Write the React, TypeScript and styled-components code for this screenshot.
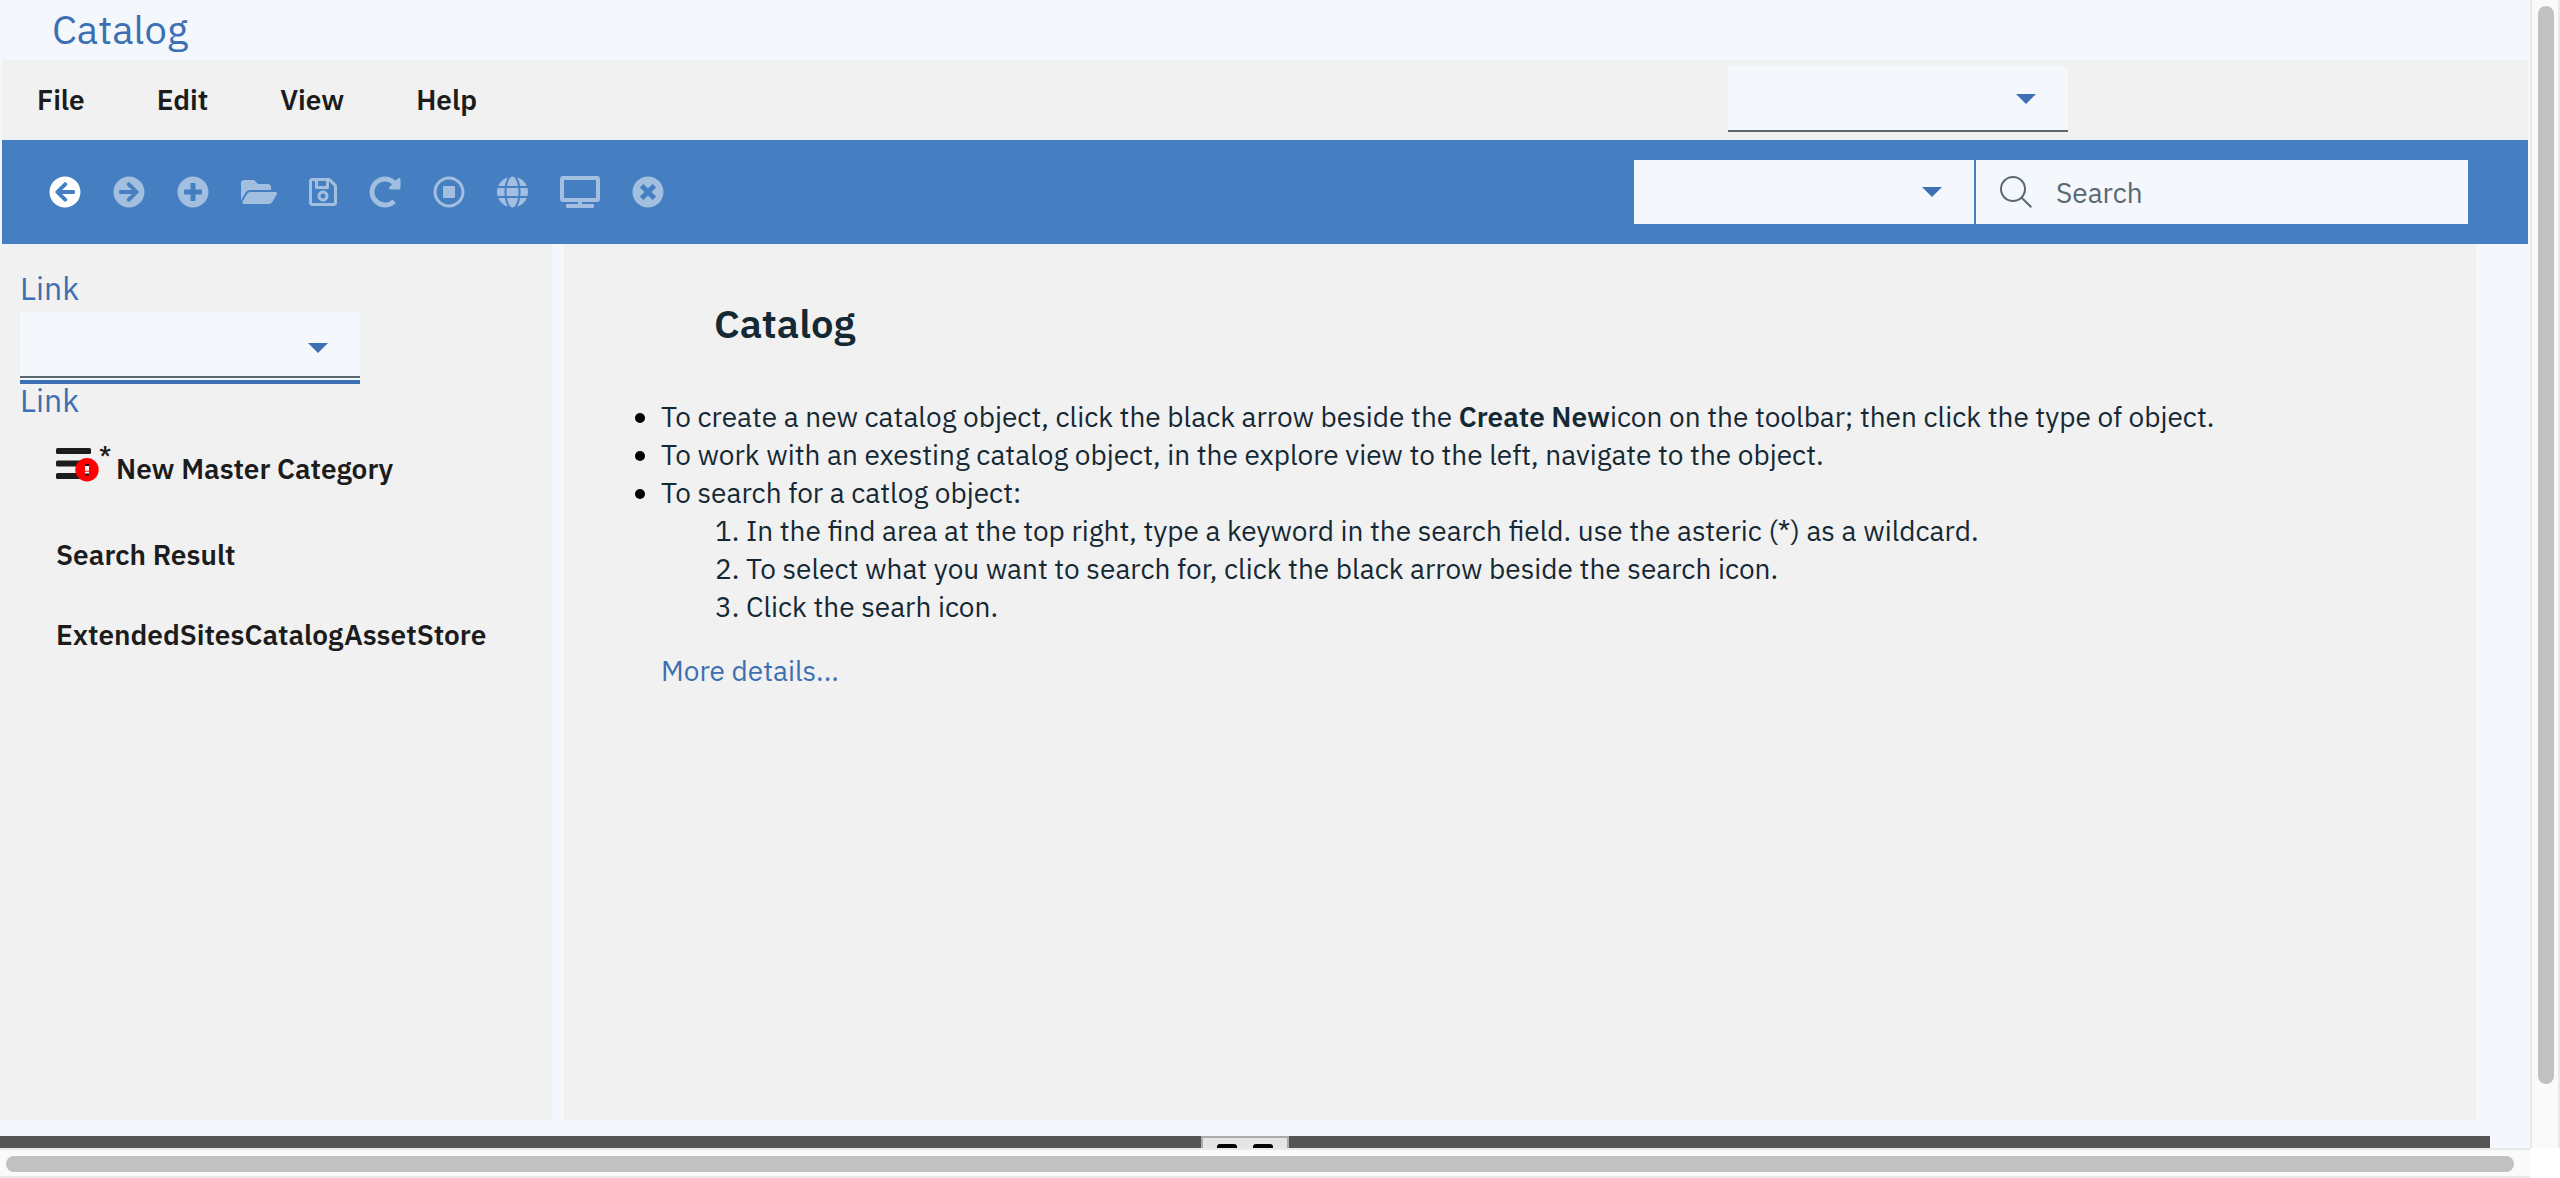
import React from "react";
import styled, { createGlobalStyle } from "styled-components";
import {
  FaArrowCircleLeft,
  FaArrowCircleRight,
  FaFolderOpen,
  FaGlobe,
  FaPlusCircle,
  FaRedoAlt,
  FaRegSave,
  FaRegStopCircle,
  FaTimesCircle,
  FaTv,
} from "react-icons/fa";

const color = {
  page: "#f4f7fc",
  panel: "#f1f1f1",
  brand: "#457ec1",
  link: "#3d70b2",
  text: "#152935",
  strong: "#1c1c1c",
  muted: "#5a6872",
};

const GlobalStyle = createGlobalStyle`
  * { box-sizing: border-box; }
  body {
    margin: 0;
    background: #fff;
    color: ${color.text};
    font-family: "IBM Plex Sans", Roboto, "Liberation Sans", sans-serif;
    font-size: 28px;
  }
  a { color: ${color.link}; text-decoration: none; }
  b { font-weight: 600; }
  ul, ol, h1, h2, p { margin: 0; padding: 0; }
  button, select, input { font: inherit; }
`;

const Frame = styled.div`
  display: grid;
  grid-template-columns: minmax(0, 1fr) 30px;
  grid-template-rows: minmax(0, 1fr) 30px;
  height: 100vh;
  overflow: hidden;
`;

const Page = styled.div`
  display: flex;
  flex-direction: column;
  background: ${color.page};
`;

const TitleBar = styled.header`
  padding: 0 0 2px 52px;
  font-size: 40px;
  line-height: 58px;
`;

const MenuBar = styled.nav`
  display: flex;
  justify-content: space-between;
  align-items: center;
  height: 80px;
  margin: 0 2px;
  padding: 6px 460px 8px 35px;
  background: ${color.panel};
`;

const MenuList = styled.div`
  display: flex;
  gap: 72px;
  padding-top: 2px;
`;

const MenuButton = styled.button`
  padding: 0;
  border: 0;
  background: none;
  color: ${color.strong};
  font-weight: 600;
  line-height: 40px;
`;

const Toolbar = styled.div`
  display: flex;
  justify-content: space-between;
  align-items: center;
  height: 104px;
  margin: 0 2px;
  padding: 0 60px 0 47px;
  background: ${color.brand};
`;

const ToolGroup = styled.div`
  display: flex;
  gap: 32px;
`;

const ToolButton = styled.button<{ $active?: boolean; $width?: number }>`
  display: flex;
  padding: 0;
  border: 0;
  background: none;
  color: #fff;
  opacity: ${(p) => (p.$active ? 1 : 0.5)};

  svg {
    width: ${(p) => p.$width ?? 32}px;
    height: 32px;
  }
`;

const SearchGroup = styled.div`
  display: flex;
  gap: 2px;
`;

const SelectBox = styled.div<{ $line?: boolean; $focused?: boolean }>`
  display: grid;
  width: 340px;
  background: ${color.page};
  padding-bottom: ${(p) => (p.$focused ? 2 : 0)}px;
  border-bottom: ${(p) => (p.$focused ? `4px solid ${color.link}` : "0")};

  select,
  &::after {
    grid-area: 1 / 1;
  }

  select {
    width: 100%;
    height: ${(p) => (p.$line ? 66 : 64)}px;
    border: 0;
    border-bottom: ${(p) => (p.$line ? `2px solid ${color.muted}` : "0")};
    border-radius: 0;
    outline: 0;
    appearance: none;
    background: none;
    color: ${color.text};
  }

  &::after {
    content: "";
    align-self: center;
    justify-self: end;
    margin: ${(p) => (p.$focused ? 6 : 0)}px 32px 0 0;
    border: 10px solid transparent;
    border-top-color: ${color.link};
    border-bottom: 0;
    pointer-events: none;
  }
`;

const SearchField = styled.label`
  display: flex;
  align-items: center;
  gap: 24px;
  width: 492px;
  height: 64px;
  padding: 0 24px;
  background: ${color.page};

  input {
    flex: 1;
    min-width: 0;
    padding: 0;
    border: 0;
    outline: 0;
    background: none;
    color: ${color.text};
  }

  input::placeholder {
    color: ${color.muted};
    opacity: 1;
  }
`;

const Body = styled.div`
  display: flex;
  flex: 1;
  gap: 12px;
  min-height: 0;
  padding: 0 54px 16px 0;
`;

const Sidebar = styled.aside`
  width: 552px;
  padding: 28px 20px;
  background: ${color.panel};
`;

const SideLink = styled.a`
  display: block;
  width: max-content;
  font-size: 32px;
  line-height: 32px;

  & + div {
    margin-top: 8px;
  }
`;

const Tree = styled.ul`
  margin-top: 6px;
  padding-left: 36px;
  list-style: none;
`;

const TreeItem = styled.li<{ $tall?: boolean }>`
  display: flex;
  align-items: center;
  height: ${(p) => (p.$tall ? 92 : 80)}px;
  color: ${color.strong};
  font-weight: 600;
`;

const CategoryMark = styled.span`
  display: flex;
  align-items: flex-start;
  width: 60px;
  height: 40px;
  font-size: 22px;
  line-height: 14px;

  svg {
    flex: none;
  }
`;

const Content = styled.main`
  flex: 1;
  padding: 52px 60px 0 97px;
  background: ${color.panel};
  line-height: 38px;
`;

const Heading = styled.h2`
  margin-bottom: 48px;
  padding-left: 53px;
  font-size: 40px;
  font-weight: 600;
  line-height: 54px;
`;

const Bullets = styled.ul`
  > li::marker {
    color: #000;
  }
`;

const Steps = styled.ol`
  padding-left: 85px;
`;

const MoreDetails = styled.p`
  margin-top: 26px;
`;

const SplitBar = styled.div`
  display: flex;
  justify-content: center;
  height: 12px;
  margin-right: 40px;
  background: #555;
`;

const SplitHandle = styled.div`
  display: flex;
  justify-content: center;
  gap: 16px;
  width: 88px;
  padding-top: 6px;
  border: 2px solid #ababab;
  border-bottom: 0;
  background: #e5e5e5;
`;

const Grip = styled.span`
  width: 20px;
  height: 4px;
  border-radius: 3px 3px 0 0;
  background: #000;
`;

const ScrollTrack = styled.div<{ $vertical?: boolean }>`
  border: solid #e9e9eb;
  border-width: ${(p) => (p.$vertical ? "0 2px" : "2px 0")};
  padding: ${(p) => (p.$vertical ? "6px 4px 64px 6px" : "6px 16px 4px 6px")};
  background: #fafafa;
`;

const ScrollThumb = styled.div`
  height: 100%;
  border-radius: 8px;
  background: #c1c1c1;
`;

const tools = [
  { label: "Back", Icon: FaArrowCircleLeft, active: true },
  { label: "Forward", Icon: FaArrowCircleRight },
  { label: "Create new", Icon: FaPlusCircle },
  { label: "Open", Icon: FaFolderOpen, width: 36 },
  { label: "Save", Icon: FaRegSave, width: 28 },
  { label: "Refresh", Icon: FaRedoAlt },
  { label: "Stop", Icon: FaRegStopCircle },
  { label: "Web", Icon: FaGlobe, width: 31 },
  { label: "Preview", Icon: FaTv, width: 40 },
  { label: "Close", Icon: FaTimesCircle },
];

function Select({ label, line, focused }: { label: string; line?: boolean; focused?: boolean }) {
  return (
    <SelectBox $line={line} $focused={focused}>
      <select aria-label={label} defaultValue="">
        <option value="" />
      </select>
    </SelectBox>
  );
}

function SearchIcon() {
  return (
    <svg width="32" height="32" viewBox="0 0 32 32" fill="none" stroke={color.muted} strokeWidth="2" aria-hidden="true">
      <circle cx="13" cy="13" r="12" />
      <path d="M21.5 21.5 31.3 31.3" />
    </svg>
  );
}

function CategoryIcon() {
  return (
    <svg width="43" height="34" viewBox="0 0 43 34" aria-hidden="true">
      <g fill={color.strong}>
        <rect x="0" y="0" width="35" height="6" rx="1.5" />
        <rect x="0" y="12.5" width="35" height="6" rx="1.5" />
        <rect x="0" y="25" width="35" height="6" rx="1.5" />
      </g>
      <circle cx="31" cy="21.7" r="11.7" fill="#f00" />
      <rect x="29" y="16" width="4" height="11" fill="#fff" />
      <path d="M29 16h4v2h-4zM29 25.5h4v2h-4z" fill={color.strong} />
      <path d="M29 23.2h4" stroke="#f00" strokeWidth="1" />
    </svg>
  );
}

export default function App() {
  return (
    <>
      <GlobalStyle />
      <Frame>
        <Page>
          <TitleBar>
            <a href="#catalog">Catalog</a>
          </TitleBar>
          <MenuBar aria-label="Main menu">
            <MenuList>
              {["File", "Edit", "View", "Help"].map((name) => (
                <MenuButton key={name}>{name}</MenuButton>
              ))}
            </MenuList>
            <Select label="Store" line />
          </MenuBar>
          <Toolbar>
            <ToolGroup>
              {tools.map(({ label, Icon, active, width }) => (
                <ToolButton key={label} aria-label={label} $active={active} $width={width}>
                  <Icon />
                </ToolButton>
              ))}
            </ToolGroup>
            <SearchGroup>
              <Select label="Search type" />
              <SearchField>
                <SearchIcon />
                <input type="text" placeholder="Search" aria-label="Search" />
              </SearchField>
            </SearchGroup>
          </Toolbar>
          <Body>
            <Sidebar>
              <SideLink href="#explore">Link</SideLink>
              <Select label="Explore" line focused />
              <SideLink href="#tree">Link</SideLink>
              <Tree>
                <TreeItem $tall>
                  <CategoryMark>
                    <CategoryIcon />*
                  </CategoryMark>
                  New Master Category
                </TreeItem>
                <TreeItem>Search Result</TreeItem>
                <TreeItem>ExtendedSitesCatalogAssetStore</TreeItem>
              </Tree>
            </Sidebar>
            <Content>
              <Heading>Catalog</Heading>
              <Bullets>
                <li>
                  To create a new catalog object, click the black arrow beside the <b>Create New</b>icon on the
                  toolbar; then click the type of object.
                </li>
                <li>To work with an exesting catalog object, in the explore view to the left, navigate to the object.</li>
                <li>
                  To search for a catlog object:
                  <Steps>
                    <li>
                      In the find area at the top right, type a keyword in the search field. use the asteric (*) as a
                      wildcard.
                    </li>
                    <li>To select what you want to search for, click the black arrow beside the search icon.</li>
                    <li>Click the searh icon.</li>
                  </Steps>
                </li>
              </Bullets>
              <MoreDetails>
                <a href="#details">More details...</a>
              </MoreDetails>
            </Content>
          </Body>
          <SplitBar>
            <SplitHandle>
              <Grip />
              <Grip />
            </SplitHandle>
          </SplitBar>
        </Page>
        <ScrollTrack $vertical>
          <ScrollThumb />
        </ScrollTrack>
        <ScrollTrack>
          <ScrollThumb />
        </ScrollTrack>
      </Frame>
    </>
  );
}
